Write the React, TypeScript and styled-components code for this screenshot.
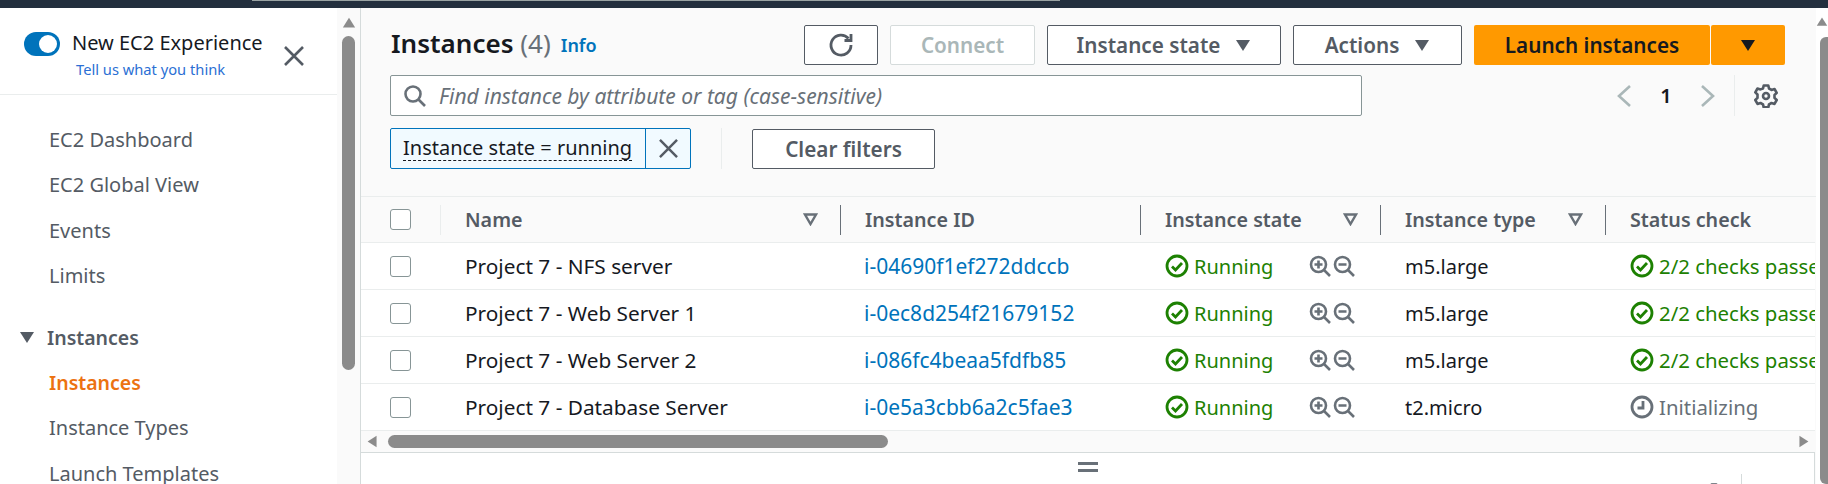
import React from "react";
import styled, { createGlobalStyle } from "styled-components";

const GlobalStyle = createGlobalStyle`
  html, body {
    margin: 0;
    padding: 0;
    overflow: hidden;
    background: #fff;
    font-family: "Noto Sans", "Open Sans", sans-serif;
  }
  * {
    box-sizing: border-box;
  }
`;

const Page = styled.div`
  width: 1828px;
  height: 484px;
  display: flex;
  flex-direction: column;
  overflow: hidden;
`;

const TopBar = styled.div`
  height: 8px;
  flex: none;
  background: #232f3e;
  border-top: 1px solid transparent;
  border-image: linear-gradient(to right, #232f3e 253px, #9aa3a3 253px, #9aa3a3 1060px, #232f3e 1060px) 1;
  border-bottom: 0;
`;

const Body = styled.div`
  flex: 1;
  display: flex;
  min-height: 0;
`;

const Side = styled.nav`
  width: 337px;
  flex: none;
  background: #fff;
  overflow: hidden;
`;

const ExperienceBar = styled.div`
  height: 87px;
  display: flex;
  align-items: flex-start;
  padding: 23px 0 0 24px;
  border-bottom: 1px solid #eaeded;
`;

const Toggle = styled.span`
  width: 36px;
  height: 24px;
  flex: none;
  margin: 1px 12px 0 0;
  border-radius: 12px;
  background: #0073bb;
  display: flex;
  align-items: center;
  justify-content: flex-end;
  padding-right: 3px;
  &::after {
    content: "";
    width: 18px;
    height: 18px;
    border-radius: 50%;
    background: #fff;
  }
`;

const ExperienceText = styled.div`
  display: flex;
  flex-direction: column;
  width: 212px;
`;

const ExperienceTitle = styled.span`
  font-size: 20px;
  line-height: 24px;
  color: #16191f;
  white-space: nowrap;
`;

const Feedback = styled.span`
  font-size: 14.7px;
  line-height: 19px;
  margin: 5px 0 0 4px;
  color: #2b6fd4;
  white-space: nowrap;
`;

const CloseWrap = styled.span`
  display: flex;
  margin-top: 15px;
  color: #545b64;
`;

const NavList = styled.div`
  display: flex;
  flex-direction: column;
  padding-top: 22px;
`;

const NavItem = styled.a<{ $active?: boolean }>`
  height: 45.4px;
  line-height: 45.4px;
  flex: none;
  padding-left: 49px;
  font-size: ${(p) => (p.$active ? "19.5px" : "20px")};
  white-space: nowrap;
  color: ${(p) => (p.$active ? "#ec7211" : "#545b64")};
  font-weight: ${(p) => (p.$active ? 600 : 400)};
`;

const NavSection = styled.div`
  height: 45.4px;
  flex: none;
  margin-top: 16px;
  display: flex;
  align-items: center;
  padding-left: 19px;
  gap: 12px;
  font-size: 19.5px;
  font-weight: 600;
  color: #545b64;
`;

const VScroll = styled.div<{ $thin?: boolean }>`
  width: ${(p) => (p.$thin ? "12px" : "23px")};
  flex: none;
  background: ${(p) => (p.$thin ? "#fff" : "#fafafa")};
  display: flex;
  flex-direction: column;
  align-items: ${(p) => (p.$thin ? "flex-end" : "center")};
  padding-top: 8px;
`;

const VThumb = styled.div<{ $thin?: boolean; $h: number }>`
  width: ${(p) => (p.$thin ? "8px" : "13px")};
  height: ${(p) => p.$h}px;
  margin-top: ${(p) => (p.$thin ? "9px" : "6px")};
  background: #8b8b8b;
  border-radius: ${(p) => (p.$thin ? "6px 0 0 6px" : "7px")};
`;

const Main = styled.main`
  flex: 1;
  min-width: 0;
  display: flex;
  background: #fafafa;
  border-left: 1px solid #d5dbdb;
`;

const Col = styled.div`
  flex: 1;
  min-width: 0;
  display: flex;
  flex-direction: column;
`;

const Toolbar = styled.section`
  padding: 17px 31px 0 29px;
  height: 189px;
  flex: none;
  border-bottom: 1px solid #eaeded;
`;

const TitleRow = styled.div`
  display: flex;
  align-items: center;
  height: 40px;
`;

const Title = styled.h1`
  margin: -5px 0 0 1px;
  font-size: 26px;
  font-weight: 600;
  color: #16191f;
  white-space: nowrap;
`;

const Count = styled.span`
  font-weight: 400;
  color: #687078;
`;

const InfoLink = styled.a`
  margin: 0 0 0 10px;
  font-size: 18px;
  font-weight: 600;
  color: #0073bb;
`;

const Actions = styled.div`
  margin-left: auto;
  display: flex;
  gap: 12px;
`;

const Btn = styled.button<{ $w: number; $disabled?: boolean }>`
  width: ${(p) => p.$w}px;
  height: 40px;
  padding: 0;
  display: flex;
  align-items: center;
  justify-content: center;
  gap: 15px;
  background: #fff;
  border: 1px solid ${(p) => (p.$disabled ? "#d5dbdb" : "#545b64")};
  border-radius: 2px;
  font-family: inherit;
  font-size: 20.7px;
  font-weight: 600;
  color: ${(p) => (p.$disabled ? "#aab7b8" : "#545b64")};
  white-space: nowrap;
`;

const LaunchGroup = styled.div`
  display: flex;
  gap: 1px;
`;

const LaunchBtn = styled.button<{ $w: number }>`
  width: ${(p) => p.$w}px;
  height: 40px;
  padding: 0;
  display: flex;
  align-items: center;
  justify-content: center;
  background: #ff9900;
  border: 0;
  border-radius: 2px;
  font-family: inherit;
  font-size: 20.7px;
  font-weight: 600;
  color: #16191f;
  white-space: nowrap;
`;

const SearchRow = styled.div`
  display: flex;
  align-items: center;
  height: 41px;
  margin-top: 10px;
`;

const Search = styled.div`
  width: 972px;
  height: 41px;
  display: flex;
  align-items: center;
  gap: 12px;
  padding-left: 12px;
  background: #fff;
  border: 1px solid #879596;
  border-radius: 2px;
  color: #687078;
`;

const Placeholder = styled.span`
  font-size: 21px;
  font-style: italic;
  color: #687078;
  white-space: nowrap;
`;

const Pager = styled.div`
  margin: 0 7px 0 auto;
  display: flex;
  align-items: center;
  height: 41px;
`;

const PageNum = styled.span`
  width: 68px;
  text-align: center;
  font-size: 20px;
  font-weight: 600;
  color: #16191f;
`;

const PrefDivider = styled.span`
  width: 1px;
  height: 41px;
  background: #eaeded;
  margin: 0 19px 0 18px;
`;

const FilterRow = styled.div`
  display: flex;
  align-items: center;
  height: 41px;
  margin-top: 12px;
`;

const Chip = styled.div`
  display: flex;
  height: 41px;
  width: 301px;
  background: #f1faff;
  border: 1px solid #0073bb;
  border-radius: 2px;
`;

const ChipLabel = styled.span`
  width: 255px;
  padding-left: 12px;
  flex: none;
  border-right: 1px solid #0073bb;
  font-size: 20px;
  line-height: 37px;
  color: #16191f;
  white-space: nowrap;
  span {
    border-bottom: 1px dashed #16191f;
    display: inline-block;
    line-height: 24px;
  }
`;

const ChipClose = styled.span`
  flex: 1;
  display: flex;
  align-items: center;
  justify-content: center;
  color: #545b64;
`;

const FilterDivider = styled.span`
  width: 1px;
  height: 41px;
  background: #eaeded;
  margin: 0 30px;
`;

const Table = styled.div`
  flex: none;
  width: 1454px;
  overflow: hidden;
`;

const Row = styled.div<{ $head?: boolean }>`
  display: grid;
  grid-template-columns: 79px 400px 300px 240px 225px 210px;
  height: ${(p) => (p.$head ? "46px" : "47px")};
  align-items: center;
  background: ${(p) => (p.$head ? "#fafafa" : "#fff")};
  border-bottom: 1px solid #eaeded;
`;

const CheckCell = styled.div`
  padding-left: 29px;
  display: flex;
  align-items: center;
`;

const Checkbox = styled.span`
  width: 21px;
  height: 21px;
  background: #fff;
  border: 1px solid #879596;
  border-radius: 3px;
`;

const HeadCell = styled.div<{ $light?: boolean }>`
  height: 30px;
  display: flex;
  align-items: center;
  justify-content: space-between;
  padding: 0 22px 0 24px;
  font-size: 19.7px;
  font-weight: 600;
  color: #545b64;
  white-space: nowrap;
  border-left: 1px solid ${(p) => (p.$light ? "#eaeded" : "#687078")};
`;

const Cell = styled.div<{ $size?: number }>`
  padding-left: 25px;
  display: flex;
  align-items: center;
  font-size: ${(p) => p.$size ?? 20}px;
  color: #16191f;
  white-space: nowrap;
  overflow: hidden;
`;

const IdLink = styled.a`
  margin-left: -1px;
  color: #0073bb;
`;

const Status = styled.span<{ $pending?: boolean }>`
  display: inline-flex;
  flex: none;
  align-items: center;
  gap: 5px;
  color: ${(p) => (p.$pending ? "#687078" : "#1d8102")};
`;

const ZoomIcons = styled.span`
  margin-left: 36px;
  display: inline-flex;
  flex: none;
  gap: 2px;
  color: #687078;
`;

const HScroll = styled.div`
  height: 21px;
  flex: none;
  display: flex;
  align-items: center;
  padding: 0 6px 0 5px;
  background: #fafafa;
`;

const HThumb = styled.div`
  width: 500px;
  height: 13px;
  margin-left: 9px;
  background: #8b8b8b;
  border-radius: 7px;
`;

const HRight = styled.span`
  margin-left: auto;
  display: flex;
`;

const Details = styled.section`
  flex: 1;
  min-height: 0;
  margin-right: 1px;
  background: #fff;
  border-top: 1px solid #d5dbdb;
  border-right: 1px solid #d5dbdb;
  display: flex;
  flex-direction: column;
  align-items: center;
  overflow: hidden;
`;

const Handle = styled.div`
  width: 20px;
  height: 10px;
  flex: none;
  margin-top: 9px;
  border-top: 3px solid #687078;
  border-bottom: 3px solid #687078;
`;

const DetailsHead = styled.div`
  align-self: stretch;
  flex: none;
  display: flex;
  align-items: flex-start;
  margin-top: 2px;
  padding: 0 37px 0 29px;
`;

const DetailsTitle = styled.h2`
  margin: 4px auto 0 0;
  font-size: 26px;
  line-height: 30px;
  font-weight: 600;
  color: #16191f;
  white-space: nowrap;
`;

const DetailsTool = styled.span<{ $top: number }>`
  display: flex;
  margin-top: ${(p) => p.$top}px;
  color: #545b64;
`;

const DetailsDivider = styled.span`
  width: 1px;
  height: 30px;
  background: #d5dbdb;
  margin: 0 15px;
`;

const Triangle = ({ dir, size, color }: { dir: "up" | "down" | "left" | "right"; size: number; color: string }) => {
  const rot = { down: 0, up: 180, left: 90, right: 270 }[dir];
  return (
    <svg width={size} height={size} viewBox="0 0 16 16" style={{ transform: `rotate(${rot}deg)`, flex: "none" }}>
      <path d="M1 3h14L8 14z" fill={color} />
    </svg>
  );
};

const CloseIcon = ({ size }: { size: number }) => (
  <svg width={size} height={size} viewBox="0 0 20 20" fill="none" stroke="currentColor" strokeWidth="2.6">
    <path d="M1 1l18 18M19 1L1 19" />
  </svg>
);

const SearchIcon = () => (
  <svg width="24" height="24" viewBox="0 0 24 24" fill="none" stroke="currentColor" strokeWidth="2.6" style={{ flex: "none" }}>
    <circle cx="10" cy="10" r="7.5" />
    <path d="M15.5 15.5L22 22" />
  </svg>
);

const RefreshIcon = () => (
  <svg width="26" height="26" viewBox="0 0 26 26" fill="none" stroke="#545b64" strokeWidth="2.8">
    <path d="M20.5 6.5A10 10 0 1 0 23 13" />
    <path d="M23 2v6.5h-6.5" />
  </svg>
);

const Chevron = ({ right }: { right?: boolean }) => (
  <svg width="16" height="24" viewBox="0 0 16 24" fill="none" stroke="#aab7b8" strokeWidth="2.6">
    <path d={right ? "M2 2l11 10L2 22" : "M14 2L3 12l11 10"} />
  </svg>
);

const GearIcon = () => (
  <svg width="24" height="24" viewBox="0 0 24 24" fill="none" stroke="#545b64" strokeWidth="2.6" strokeLinejoin="round">
    <path d="M9.7 1.5h4.6l.7 3 2.5 1.4 3-.9 2.2 3.9-2.2 2.1v2.900l2.200 2.100-2.200 3.900-3-.9-2.500 1.400-.7 3H9.700l-.7-3-2.500-1.400-3 .9-2.200-3.900 2.200-2.100V10.500L1.300 8.400l2.200-3.900 3 .9L9 4.500z" />
    <circle cx="12" cy="12" r="3" />
  </svg>
);

const FilterIcon = () => (
  <svg width="15" height="13" viewBox="0 0 15 13" fill="none" stroke="#687078" strokeWidth="2.4">
    <path d="M2 1.5h11L7.5 11z" />
  </svg>
);

const CheckCircle = () => (
  <svg width="24" height="24" viewBox="0 0 24 24" fill="none" stroke="#1d8102" strokeWidth="2.8" style={{ flex: "none" }}>
    <circle cx="12" cy="12" r="10" />
    <path d="M7 12.5l3.500 3.500L17 9" />
  </svg>
);

const ClockIcon = () => (
  <svg width="24" height="24" viewBox="0 0 24 24" fill="none" stroke="#687078" strokeWidth="2.8" style={{ flex: "none" }}>
    <circle cx="12" cy="12" r="10" />
    <path d="M13 6v7H7.5" />
  </svg>
);

const ZoomGlass = ({ plus }: { plus?: boolean }) => (
  <svg width="22" height="22" viewBox="0 0 22 22" fill="none" stroke="currentColor" strokeWidth="2.6">
    <circle cx="9.5" cy="9.5" r="7.5" />
    <path d="M15 15l6 6M5.500 9.500h8" />
    {plus && <path d="M9.5 5.500v8" />}
  </svg>
);

type Instance = { name: string; id: string; type: string; initializing?: boolean };

const instances: Instance[] = [
  { name: "Project 7 - NFS server", id: "i-04690f1ef272ddccb", type: "m5.large" },
  { name: "Project 7 - Web Server 1", id: "i-0ec8d254f21679152", type: "m5.large" },
  { name: "Project 7 - Web Server 2", id: "i-086fc4beaa5fdfb85", type: "m5.large" },
  { name: "Project 7 - Database Server", id: "i-0e5a3cbb6a2c5fae3", type: "t2.micro", initializing: true },
];

const App = () => (
  <Page>
    <GlobalStyle />
    <TopBar />
    <Body>
      <Side>
        <ExperienceBar>
          <Toggle />
          <ExperienceText>
            <ExperienceTitle>New EC2 Experience</ExperienceTitle>
            <Feedback>Tell us what you think</Feedback>
          </ExperienceText>
          <CloseWrap><CloseIcon size={20} /></CloseWrap>
        </ExperienceBar>
        <NavList>
          <NavItem>EC2 Dashboard</NavItem>
          <NavItem>EC2 Global View</NavItem>
          <NavItem>Events</NavItem>
          <NavItem>Limits</NavItem>
          <NavSection>
            <Triangle dir="down" size={16} color="#545b64" />
            Instances
          </NavSection>
          <NavItem $active>Instances</NavItem>
          <NavItem>Instance Types</NavItem>
          <NavItem>Launch Templates</NavItem>
        </NavList>
      </Side>
      <VScroll>
        <Triangle dir="up" size={14} color="#8b8b8b" />
        <VThumb $h={334} />
      </VScroll>
      <Main>
        <Col>
          <Toolbar>
            <TitleRow>
              <Title>Instances <Count>(4)</Count></Title>
              <InfoLink>Info</InfoLink>
              <Actions>
                <Btn $w={74}><RefreshIcon /></Btn>
                <Btn $w={145} $disabled>Connect</Btn>
                <Btn $w={234}>Instance state <Triangle dir="down" size={16} color="#545b64" /></Btn>
                <Btn $w={169}>Actions <Triangle dir="down" size={16} color="#545b64" /></Btn>
                <LaunchGroup>
                  <LaunchBtn $w={236}>Launch instances</LaunchBtn>
                  <LaunchBtn $w={74}><Triangle dir="down" size={16} color="#16191f" /></LaunchBtn>
                </LaunchGroup>
              </Actions>
            </TitleRow>
            <SearchRow>
              <Search>
                <SearchIcon />
                <Placeholder>Find instance by attribute or tag (case-sensitive)</Placeholder>
              </Search>
              <Pager>
                <Chevron />
                <PageNum>1</PageNum>
                <Chevron right />
                <PrefDivider />
                <GearIcon />
              </Pager>
            </SearchRow>
            <FilterRow>
              <Chip>
                <ChipLabel><span>Instance state = running</span></ChipLabel>
                <ChipClose><CloseIcon size={19} /></ChipClose>
              </Chip>
              <FilterDivider />
              <Btn $w={183}>Clear filters</Btn>
            </FilterRow>
          </Toolbar>
          <Table>
            <Row $head>
              <CheckCell><Checkbox /></CheckCell>
              <HeadCell $light>Name <FilterIcon /></HeadCell>
              <HeadCell>Instance ID</HeadCell>
              <HeadCell>Instance state <FilterIcon /></HeadCell>
              <HeadCell>Instance type <FilterIcon /></HeadCell>
              <HeadCell>Status check</HeadCell>
            </Row>
            {instances.map((inst) => (
              <Row key={inst.id}>
                <CheckCell><Checkbox /></CheckCell>
                <Cell $size={20.8}>{inst.name}</Cell>
                <Cell $size={21}><IdLink>{inst.id}</IdLink></Cell>
                <Cell>
                  <Status><CheckCircle />Running</Status>
                  <ZoomIcons><ZoomGlass plus /><ZoomGlass /></ZoomIcons>
                </Cell>
                <Cell>{inst.type}</Cell>
                <Cell $size={20.4}>
                  {inst.initializing
                    ? <Status $pending><ClockIcon />Initializing</Status>
                    : <Status><CheckCircle />2/2 checks passed</Status>}
                </Cell>
              </Row>
            ))}
          </Table>
          <HScroll>
            <Triangle dir="left" size={13} color="#8b8b8b" />
            <HThumb />
            <HRight><Triangle dir="right" size={13} color="#8b8b8b" /></HRight>
          </HScroll>
          <Details>
            <Handle />
            <DetailsHead>
              <DetailsTitle>Select an instance</DetailsTitle>
              <DetailsTool $top={9}><GearIcon /></DetailsTool>
              <DetailsDivider />
              <DetailsTool $top={10}><CloseIcon size={20} /></DetailsTool>
            </DetailsHead>
          </Details>
        </Col>
        <VScroll $thin>
          <Triangle dir="up" size={12} color="#8b8b8b" />
          <VThumb $thin $h={460} />
        </VScroll>
      </Main>
    </Body>
  </Page>
);

export default App;
